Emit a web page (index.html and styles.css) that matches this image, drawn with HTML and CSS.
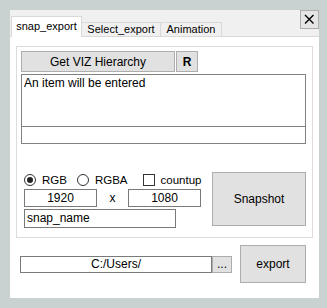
FILE: index.html
```html
<!DOCTYPE html>
<html lang="en">
<head>
    <meta charset="UTF-8">
    <meta name="viewport" content="width=device-width, initial-scale=1.0">
    <title>snap_export</title>
    <link rel="stylesheet" href="styles.css">
</head>
<body>
    <div class="window">
        <div class="tabbar">
            <div class="tab active">snap_export</div>
            <div class="tab select">Select_export</div>
            <div class="tab anim">Animation</div>
            <button class="close" aria-label="close">
                <svg width="19" height="19" viewBox="0 0 19 19">
                    <path d="M5 5 L13.5 13.5 M13.5 5 L5 13.5" stroke="#000" stroke-width="1.4" fill="none"/>
                </svg>
            </button>
        </div>

        <div class="page">
            <div class="group">
                <div class="hier-row">
                    <button class="btn hier">Get VIZ Hierarchy</button>
                    <button class="btn reload">R</button>
                </div>
                <div class="listbox">An item will be entered</div>
                <div class="entry"></div>

                <div class="snap-row">
                    <div class="snap-left">
                        <div class="opts">
                            <span class="radio checked"></span><span class="opt-label">RGB</span>
                            <span class="radio second"></span><span class="opt-label">RGBA</span>
                            <span class="check"></span><span class="opt-label">countup</span>
                        </div>
                        <div class="size-row">
                            <div class="field num">1920</div>
                            <span class="times">x</span>
                            <div class="field num">1080</div>
                        </div>
                        <div class="field name">snap_name</div>
                    </div>
                    <button class="btn snapshot">Snapshot</button>
                </div>
            </div>

            <div class="export-row">
                <div class="field path">C:/Users/</div>
                <button class="btn dots">...</button>
                <button class="btn export">export</button>
            </div>
        </div>
    </div>
</body>
</html>
```

FILE: styles.css
```css
* {
    box-sizing: border-box;
}

body {
    margin: 0;
    padding: 10px 8px 10px 10px;
    background-color: #c9d1d1;
    font-family: "Liberation Sans", Arial, sans-serif;
    font-size: 12px;
    color: #000;
}

.window {
    width: 309px;
    height: 288px;
    background-color: #fff;
    display: flex;
    flex-direction: column;
}

/* tab strip */
.tabbar {
    height: 27px;
    background-color: #f0f0f0;
    border-bottom: 1px solid #d9d9d9;
    display: flex;
    align-items: flex-end;
    padding-left: 1px;
}

.tab {
    height: 14px;
    line-height: 12px;
    font-size: 11px;
    text-align: center;
    background-color: #f0f0f0;
    border: 1px solid #d9d9d9;
    border-bottom: none;
    white-space: nowrap;
}

.tab.active {
    width: 71px;
    height: 21px;
    line-height: 19px;
    margin-bottom: -1px;
    background-color: #fff;
    position: relative;
}

.tab.select {
    width: 79px;
    border-left: none;
}

.tab.anim {
    width: 61px;
    border-left: none;
}

.close {
    margin-left: auto;
    align-self: flex-start;
    width: 19px;
    height: 19px;
    padding: 0;
    border: 1px solid #adadad;
    background-color: #e5e5e5;
    display: flex;
}

.close svg {
    margin: -1px;
}

/* page */
.page {
    flex: 1;
    padding: 9px 6px 0 6px;
}

.group {
    height: 192px;
    border: 1px solid #dcdcdc;
    padding: 4px 6px 0 4px;
}

.btn {
    font-family: inherit;
    font-size: 12px;
    color: #000;
    background-color: #e1e1e1;
    border: 1px solid #adadad;
    padding: 0;
}

.hier-row {
    display: flex;
    gap: 1px;
}

.hier {
    width: 154px;
    height: 21px;
}

.reload {
    width: 22px;
    height: 21px;
    font-weight: bold;
}

.listbox {
    margin-top: 2px;
    height: 53px;
    border: 1px solid #828282;
    padding: 1px 2px;
    line-height: 14px;
}

.entry {
    margin-top: -1px;
    height: 18px;
    border: 1px solid #828282;
}

/* snapshot options */
.snap-row {
    margin-top: 28px;
    display: flex;
    align-items: flex-start;
}

.snap-left {
    margin-left: 3px;
    margin-top: 1px;
}

.opts {
    height: 14px;
    display: flex;
    align-items: center;
    font-size: 11.5px;
}

.radio {
    width: 12px;
    height: 12px;
    border: 1px solid #333;
    border-radius: 50%;
    background-color: #fff;
    display: flex;
    align-items: center;
    justify-content: center;
}

.radio.checked::after {
    content: "";
    width: 6px;
    height: 6px;
    border-radius: 50%;
    background-color: #222;
}

.radio.second {
    margin-left: 10px;
}

.check {
    width: 12px;
    height: 12px;
    border: 1px solid #333;
    background-color: #fff;
    margin-left: 15px;
}

.opt-label {
    margin-left: 6px;
}

.size-row {
    margin-top: 2px;
    display: flex;
    align-items: center;
}

.field {
    border: 1px solid #7a7a7a;
    background-color: #fff;
    line-height: 16px;
}

.num {
    width: 73px;
    height: 18px;
    text-align: center;
}

.times {
    width: 31px;
    text-align: center;
}

.name {
    margin-top: 2px;
    width: 152px;
    height: 19px;
    padding-left: 2px;
}

.snapshot {
    margin-left: auto;
    width: 94px;
    height: 54px;
}

/* export */
.export-row {
    margin-top: 7px;
    margin-left: 4px;
    display: flex;
    align-items: center;
}

.path {
    width: 192px;
    height: 17px;
    line-height: 15px;
    text-align: center;
}

.dots {
    width: 20px;
    height: 17px;
    line-height: 12px;
}

.export {
    margin-left: 8px;
    width: 66px;
    height: 38px;
}
```
